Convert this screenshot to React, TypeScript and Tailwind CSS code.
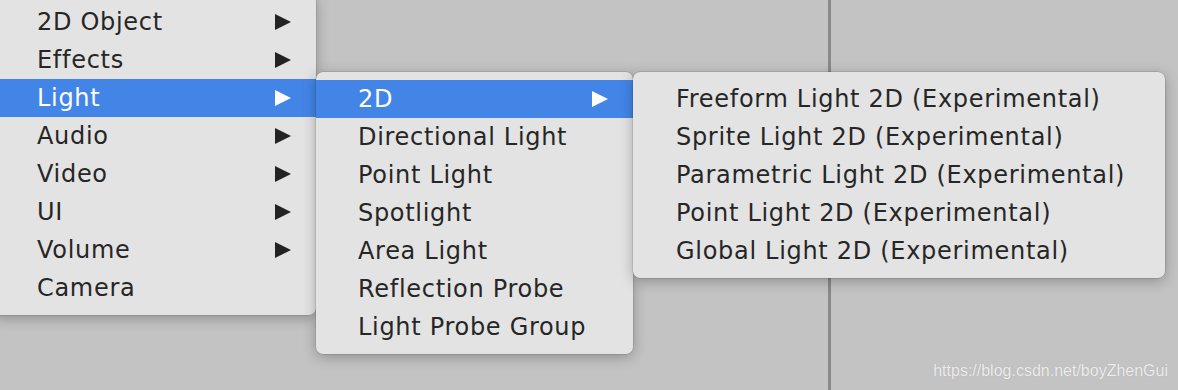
import React from 'react';

type Item = { label: string; sub?: boolean; active?: boolean };

const mainItems: Item[] = [
  { label: '2D Object', sub: true },
  { label: 'Effects', sub: true },
  { label: 'Light', sub: true, active: true },
  { label: 'Audio', sub: true },
  { label: 'Video', sub: true },
  { label: 'UI', sub: true },
  { label: 'Volume', sub: true },
  { label: 'Camera' },
];

const lightItems: Item[] = [
  { label: '2D', sub: true, active: true },
  { label: 'Directional Light' },
  { label: 'Point Light' },
  { label: 'Spotlight' },
  { label: 'Area Light' },
  { label: 'Reflection Probe' },
  { label: 'Light Probe Group' },
];

const light2dItems: Item[] = [
  { label: 'Freeform Light 2D (Experimental)' },
  { label: 'Sprite Light 2D (Experimental)' },
  { label: 'Parametric Light 2D (Experimental)' },
  { label: 'Point Light 2D (Experimental)' },
  { label: 'Global Light 2D (Experimental)' },
];

const Arrow = ({ active }: { active?: boolean }) => (
  <svg width="18" height="18" viewBox="0 0 18 18" className="shrink-0">
    <path d="M1 1 L17 9 L1 17 Z" fill={active ? '#ffffff' : '#232323'} />
  </svg>
);

const Row = ({ item, pl }: { item: Item; pl: string }) => (
  <div
    className={`flex h-[38px] items-center justify-between pr-[24px] ${pl} ${
      item.active ? 'bg-[#4385e7] text-white' : 'text-[#262626]'
    }`}
  >
    <span className="whitespace-nowrap">{item.label}</span>
    {item.sub && <Arrow active={item.active} />}
  </div>
);

const Menu = ({ items, className, pl }: { items: Item[]; className: string; pl: string }) => (
  <div
    className={`shrink-0 rounded-[7px] bg-[#e3e3e3] py-[8px] shadow-[0_3px_14px_rgba(0,0,0,0.28),0_0_0_0.5px_rgba(0,0,0,0.18)] ${className}`}
  >
    {items.map((it) => (
      <Row key={it.label} item={it} pl={pl} />
    ))}
  </div>
);

export default function App() {
  return (
    <div className="relative h-[390px] w-[1178px] overflow-hidden bg-[#c3c3c3] font-['DejaVu_Sans',sans-serif] text-[24px] tracking-[0.7px]">
      {/* scene backdrop with the pane divider */}
      <div className="flex h-full">
        <div className="w-[828px]" />
        <div className="w-[3px] bg-[#8a8a8a]" />
        <div className="flex-1" />
      </div>

      {/* cascading context menus */}
      <div className="absolute left-0 top-0 flex items-start">
        <Menu items={mainItems} pl="pl-[45px]" className="-ml-[8px] -mt-[5px] w-[324px]" />
        <Menu items={lightItems} pl="pl-[42px]" className="mt-[72px] w-[317px]" />
        <Menu items={light2dItems} pl="pl-[43px]" className="mt-[72px] w-[532px]" />
      </div>

      <div className="absolute bottom-[7px] right-[10px] font-['Liberation_Sans',sans-serif] text-[16px] tracking-normal text-[#ececec] [text-shadow:0_0_1px_rgba(0,0,0,0.15)]">
        https://blog.csdn.net/boyZhenGui
      </div>
    </div>
  );
}
